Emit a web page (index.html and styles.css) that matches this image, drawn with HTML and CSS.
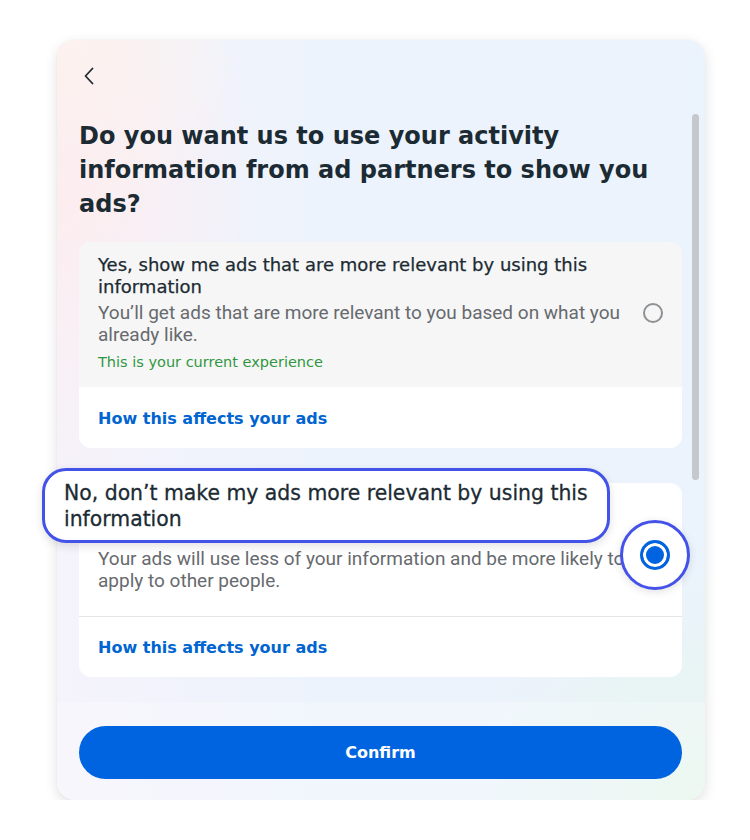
FILE: index.html
```html
<!DOCTYPE html>
<html lang="en">
<head>
<meta charset="utf-8">
<title>Ad preferences</title>
<link rel="stylesheet" href="styles.css">
</head>
<body>
<div class="card">
  <div class="scroll">
    <div class="content">
      <button class="back" aria-label="Back">
        <svg width="14" height="18" viewBox="0 0 14 18"><path d="M10.5 1.5 L3.5 9 L10.5 16.5" fill="none" stroke="#1c2b33" stroke-width="1.8" stroke-linecap="round" stroke-linejoin="round"/></svg>
      </button>
      <h1 class="title">Do you want us to use your activity information from ad partners to show you ads?</h1>

      <div class="option">
        <div class="option-top grey">
          <div class="option-text">
            <div class="opt-title">Yes, show me ads that are more relevant by using this information</div>
            <div class="opt-desc">You’ll get ads that are more relevant to you based on what you already like.</div>
            <div class="opt-note">This is your current experience</div>
          </div>
          <span class="radio"></span>
        </div>
        <div class="option-bottom">
          <a class="link">How this affects your ads</a>
        </div>
      </div>

      <div class="option">
        <div class="option-top second">
          <div class="option-text">
            <div class="pill">No, don’t make my ads more relevant by using this information</div>
            <div class="opt-desc">Your ads will use less of your information and be more likely to apply to other people.</div>
          </div>
          <span class="radio-ring"><span class="radio checked"></span></span>
        </div>
        <div class="option-bottom bordered">
          <a class="link">How this affects your ads</a>
        </div>
      </div>
    </div>
    <div class="track"><div class="thumb"></div></div>
  </div>
  <div class="footer">
    <button class="confirm">Confirm</button>
  </div>
</div>
</body>
</html>
```

FILE: styles.css
```css
* { box-sizing: border-box; }
html, body { margin: 0; padding: 0; background: #fff; }
body { font-family: "DejaVu Sans", "Noto Sans", sans-serif; color: #1c2b33; }

.card {
  margin: 40px 0 0 57px;
  width: 648px;
  height: 760px;
  border-radius: 18px;
  box-shadow: 0 4px 14px rgba(0,0,0,0.12), 0 0 2px rgba(0,0,0,0.06);
  background:
    radial-gradient(ellipse 45% 60% at 0% 20%, rgba(253,236,238,0.9), rgba(253,236,238,0) 70%),
    radial-gradient(ellipse 40% 40% at 0% 0%, rgba(253,248,236,0.9), rgba(253,248,236,0) 70%),
    radial-gradient(ellipse 50% 40% at 100% 100%, rgba(230,246,236,1), rgba(230,246,236,0) 75%),
    linear-gradient(90deg, #f5f3fb 0%, #edf3fc 40%, #ebf3fc 100%);
  display: flex;
  flex-direction: column;
}

.scroll {
  height: 662px;
  display: flex;
  padding: 0 6px 0 22px;
}
.content { width: 603px; }
.track { width: 7px; margin-left: 10px; padding-top: 74px; }
.thumb { width: 7px; height: 366px; border-radius: 4px; background: #c5c8cc; }

.back {
  display: block;
  margin: 27px 0 0 2px;
  padding: 0;
  border: 0;
  background: none;
  width: 16px;
  height: 18px;
}

.title {
  margin: 34px 0 21px;
  font-size: 24px;
  line-height: 34px;
  font-weight: 700;
}

.option {
  border-radius: 12px;
  background: #fff;
  margin-bottom: 35px;
}
.option-top {
  display: flex;
  align-items: center;
  padding: 12px 19px 16px 19px;
  border-radius: 12px 12px 0 0;
}
.option-top.grey { background: #f6f6f6; }
.option-top.second { padding-top: 11px; padding-bottom: 24.5px; }
.option-text { flex: 1; }

.opt-title {
  font-size: 18px; line-height: 22px; font-weight: 400;
  -webkit-text-stroke: 0.25px #1c2b33;
}
.opt-desc {
  font-family: Roboto, "Noto Sans", sans-serif;
  font-size: 19px; line-height: 22px; color: #676a6e; margin-top: 3.5px;
}
.opt-note {
  font-size: 14.5px; line-height: 18px; color: #31963f; margin-top: 7.5px;
}

.radio {
  width: 20px; height: 20px;
  border-radius: 50%;
  border: 2px solid #8d9094;
  flex: none;
}
.radio.checked {
  width: 30px; height: 30px;
  border: 3px solid #0064e0;
  background: #0064e0;
  box-shadow: inset 0 0 0 3px #fff;
}
.radio-ring {
  flex: none;
  width: 70px; height: 70px;
  border-radius: 50%;
  border: 3px solid #4452ea;
  background: #fff;
  display: flex; align-items: center; justify-content: center;
  margin: 24px -27px 0 -23px;
  box-shadow: 0 2px 8px rgba(0,0,0,0.12);
}

.pill {
  margin: -26px 0 0 -56px;
  width: 568px;
  border: 3px solid #4353e8;
  border-radius: 24px;
  background: #fff;
  padding: 8.5px 6px 8.5px 19px;
  font-size: 20.4px;
  line-height: 26px;
  font-weight: 400;
  -webkit-text-stroke: 0.3px #1c2b33;
  box-shadow: 0 3px 10px rgba(0,0,0,0.12);
}
.pill + .opt-desc { margin-top: 4.5px; }

.option-bottom {
  padding: 20.5px 19px 18.5px;
}
.option-bottom.bordered { border-top: 1px solid #e6e6e6; padding-top: 19.5px; }
.link {
  font-size: 16px; line-height: 22px; font-weight: 700; color: #0064d1;
}

.footer {
  flex: 1;
  padding: 24px 23px 0 22px;
  background: rgba(255,255,255,0.25);
  border-radius: 0 0 18px 18px;
}
.confirm {
  width: 603px; height: 53px;
  border: 0; border-radius: 27px;
  background: #0064e0; color: #fff;
  font-family: "DejaVu Sans", sans-serif;
  font-size: 16px; font-weight: 700;
}
```
